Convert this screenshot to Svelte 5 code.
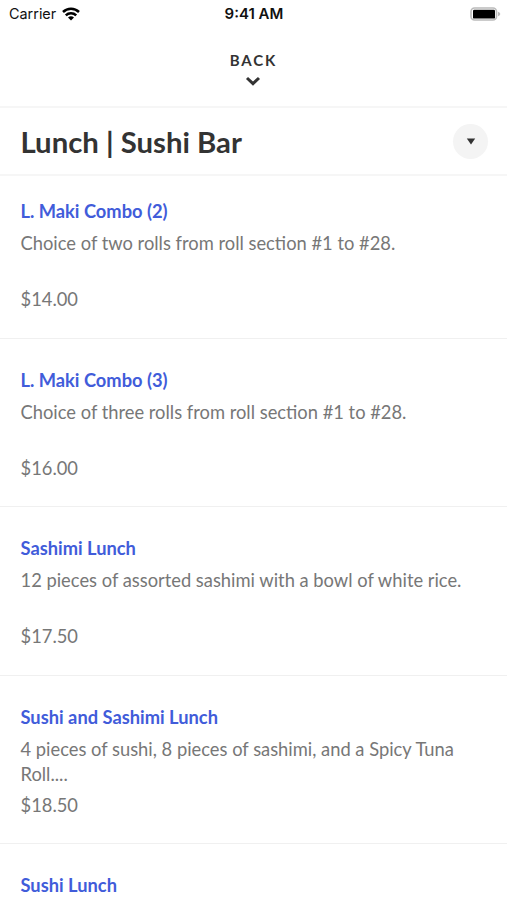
<script lang="ts">
	type MenuItem = {
		name: string;
		description: string;
		price: string;
	};

	let title: string = $state('Lunch | Sushi Bar');

	const items: MenuItem[] = [
		{ name: 'L. Maki Combo (2)', description: 'Choice of two rolls from roll section #1 to #28.', price: '$14.00' },
		{ name: 'L. Maki Combo (3)', description: 'Choice of three rolls from roll section #1 to #28.', price: '$16.00' },
		{ name: 'Sashimi Lunch', description: '12 pieces of assorted sashimi with a bowl of white rice.', price: '$17.50' },
		{ name: 'Sushi and Sashimi Lunch', description: '4 pieces of sushi, 8 pieces of sashimi, and a Spicy Tuna Roll....', price: '$18.50' },
		{ name: 'Sushi Lunch', description: '', price: '' }
	];
</script>

<div class="screen">
	<div class="status-bar">
		<div class="carrier">
			<span>Carrier</span>
			<svg class="wifi" viewBox="0 0 18 14" width="18" height="14">
				<path d="M1 5 A11.5 11.5 0 0 1 17 5" />
				<path d="M3.8 8.4 A7.4 7.4 0 0 1 14.2 8.4" />
				<path class="dot" d="M9 13.5 L6 10.6 A4.4 4.4 0 0 1 12 10.6 Z" />
			</svg>
		</div>
		<div class="time">9:41 AM</div>
		<div class="power">
			<svg viewBox="0 0 31 14" width="31" height="14">
				<rect x="1" y="1" width="25.5" height="12" rx="3.5" fill="none" stroke="#bbb" stroke-width="1.6" />
				<rect x="3" y="2.8" width="22" height="8.8" rx="1.2" />
				<path d="M28 4.8 Q30.3 5.5 30.3 7 T28 9.2 Z" fill="#bbb" />
			</svg>
		</div>
	</div>

	<button class="back">
		<span>BACK</span>
		<svg viewBox="0 0 16 10" width="16" height="10">
			<path d="M2 2 L8 7.6 L14 2" />
		</svg>
	</button>

	<header>
		<h1>{title}</h1>
		<button class="toggle" aria-label="Choose menu">
			<svg viewBox="0 0 10 7" width="10" height="7">
				<path d="M0.8 0.5 H9.2 L5 6.5 Z" />
			</svg>
		</button>
	</header>

	<main>
		{#each items as item}
			<article>
				<h2>{item.name}</h2>
				<p class="description">{item.description}</p>
				<p class="price">{item.price}</p>
			</article>
		{/each}
	</main>
</div>

<style>
	:global(body) {
		background: #fff;
	}

	.screen {
		height: 900px;
		overflow: hidden;
		display: flex;
		flex-direction: column;
		font-family: Lato, sans-serif;
		color: #777;
	}

	.status-bar {
		height: 27px;
		flex: none;
		box-sizing: border-box;
		padding: 0 6px 0 9px;
		display: grid;
		grid-template-columns: 1fr auto 1fr;
		align-items: center;
		font: 15px/27px Inter, sans-serif;
		color: #111;
	}

	.carrier {
		display: flex;
		align-items: center;
		gap: 6px;
		font-size: 14.4px;
	}

	.wifi path {
		fill: none;
		stroke: #000;
		stroke-width: 2.5;
	}

	.wifi .dot {
		fill: #000;
		stroke: none;
	}

	.time {
		padding-right: 2px;
		font-weight: 600;
	}

	.power {
		display: flex;
		justify-content: flex-end;
	}

	button {
		border: 0;
		padding: 0;
		font-family: inherit;
	}

	.back {
		height: 79px;
		flex: none;
		display: flex;
		flex-direction: column;
		align-items: center;
		padding: 23px 1px 0 0;
		box-sizing: border-box;
		background: none;
		color: #333;
		font-size: 15px;
		font-weight: 700;
		line-height: 20px;
		letter-spacing: 1.9px;
	}

	.back span {
		padding-left: 1px;
	}

	.back svg {
		margin-top: 6px;
	}

	.back path {
		fill: none;
		stroke: #333;
		stroke-width: 3;
	}

	header {
		height: 70px;
		flex: none;
		box-sizing: border-box;
		display: flex;
		align-items: center;
		justify-content: space-between;
		padding: 0 19px 0 20.5px;
		border-top: 2px solid #f6f6f6;
		border-bottom: 2px solid #f6f6f6;
	}

	h1 {
		margin: 0;
		color: #333;
		font-size: 29.3px;
		font-weight: 700;
	}

	.toggle {
		width: 35px;
		height: 35px;
		border-radius: 50%;
		background: #f4f4f4;
		display: flex;
		align-items: center;
		justify-content: center;
	}

	.toggle path {
		fill: #333;
	}

	article {
		height: 168.55px;
		box-sizing: border-box;
		padding: 29px 20.5px 0;
		border-bottom: 1px solid #f0f0f0;
		font-size: 18.34px;
		line-height: 25px;
	}

	article:first-child {
		height: 162.8px;
		padding-top: 23.4px;
	}

	h2 {
		margin: 0 0 7px;
		color: #415cda;
		font-size: 18.3px;
		font-weight: 700;
		line-height: 25px;
	}

	p {
		margin: 0;
	}

	.description {
		height: 50px;
		margin-bottom: 6px;
	}
</style>
